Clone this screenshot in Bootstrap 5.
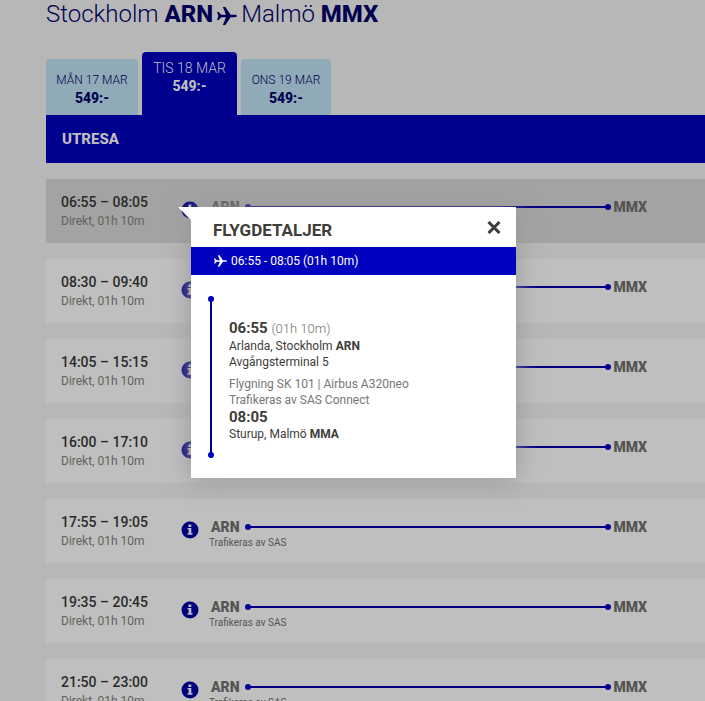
<!DOCTYPE html>
<html lang="sv">
<head>
<meta charset="utf-8">
<meta name="viewport" content="width=device-width, initial-scale=1">
<title>Stockholm ARN – Malmö MMX</title>
<link href="https://cdn.jsdelivr.net/npm/bootstrap@5.3.0/dist/css/bootstrap.min.css" rel="stylesheet">
<style>
  :root { --blue: #00008f; --route: #000080; --navy: #00004f; --bright: #0000bf; --ink: #3d3d3a; }
  body { background: #b7b7b7; font-family: Roboto, "Liberation Sans", sans-serif; font-size: 12px; line-height: 16px; color: #2b2b29; }
  button { font-family: inherit; }
  .page { padding-left: 46px; }
  .trip-title { font-size: 24px; line-height: 28px; font-weight: 300; color: var(--navy); margin-bottom: 24px; }
  .trip-title b { font-weight: 800; }
  .day-tab { border: 0; background: #90aab7; color: var(--navy); font-size: 12px; font-weight: 300; line-height: 18px; padding: 12px 10px 8px; border-radius: 4px 4px 0 0; width: 92px; white-space: nowrap; }
  .day-tab:last-child { width: 90px; }
  .day-tab b { display: block; font-size: 14px; font-weight: 800; }
  .day-tab.is-current { background: var(--blue); color: #bfbfbf; font-size: 14px; width: 95px; padding: 7px 8px 20px; }
  .leg-bar { background: var(--blue); color: #bfbfbf; font-size: 15px; line-height: 20px; font-weight: 800; padding: 14px 16px; margin-bottom: 16px; }
  .flight { background: #bfbfbf; height: 64px; padding-left: 15px; margin-bottom: 16px; }
  .flight.is-open { background: #a3a3a3; }
  .flight-time { width: 120px; padding-top: 13px; }
  .flight-hours { font-size: 14px; line-height: 20px; font-weight: 500; }
  .flight-sub { line-height: 18px; color: #62625c; }
  .info-cell { padding-top: 22px; width: 28px; }
  .info-btn { width: 18px; height: 18px; }
  .flight-route { padding: 18px 58px 0 0; }
  .route-line { font-size: 14px; line-height: 20px; font-weight: 900; color: #555553; padding-left: 2px; }
  .carrier { font-size: 10px; line-height: 12px; color: #555550; }
  .track { height: 2px; background: var(--route); margin: 0 5px 0 8px; }
  .track::before, .track::after { content: ""; width: 6px; height: 6px; border-radius: 50%; background: var(--blue); margin: -2px -3px; }
  .details { position: absolute; top: 28px; left: 10px; width: 325px; z-index: 5; background: #fff; color: var(--ink); box-shadow: 0 2px 24px #969696; }
  .details::before { content: ""; position: absolute; left: -13px; top: 0; width: 13px; height: 13px; background: #fff; clip-path: polygon(0 0, 100% 0, 100% 100%); }
  .details-head { padding: 10px 15px 6px 22px; height: 40px; }
  .details-head h2 { font-size: 17px; line-height: 26px; font-weight: 700; }
  .details-bar { background: var(--bright); color: #fff; font-size: 12px; line-height: 20px; padding: 4px 23px; }
  .details-body { padding: 21px 17px 20px; }
  .stops { width: 2px; background: var(--blue); margin-left: 2px; }
  .stops::before, .stops::after { content: ""; width: 6px; height: 6px; border-radius: 50%; background: var(--bright); margin-left: -2px; flex-shrink: 0; }
  .stop-text { padding: 23px 0 16px 17px; }
  .stop-time { font-size: 15px; line-height: 18px; }
  .stop-time span { font-size: 13px; font-weight: 300; color: #6f6f68; }
  .stop-flight { color: #777; }
  .stop-terminal { margin-bottom: 6px; }
</style>
<script src="https://cdn.jsdelivr.net/npm/bootstrap@5.3.0/dist/js/bootstrap.bundle.min.js"></script>
</head>
<body>
<svg class="d-none" xmlns="http://www.w3.org/2000/svg">
  <symbol id="plane" viewBox="0 0 20 18"><path d="M0 5h1.700l2.600 2.800H9L6.200.8 5.800 0h2.600l5.200 7.800h4.200c1.300 0 2.200.6 2.200 1.200s-.9 1.200-2.200 1.200h-4.200L8.400 18H5.800l.4-.8L9 10.200H4.300L1.700 13H0l1.300-4z"/></symbol>
  <symbol id="info" viewBox="0 0 18 18"><circle cx="9" cy="9" r="8.500" fill="#00007c"/><path d="M7.500 3.500h2.800v2.500H7.500zM6.500 7h3.800v5.200h1.200v1.600h-5v-1.600h1.200V8.600H6.500z" fill="#bfbfbf"/></symbol>
</svg>
<main class="page overflow-hidden">
  <h1 class="trip-title d-flex align-items-center"><span>Stockholm <b>ARN</b></span><svg class="mx-1 mt-1" width="20" height="18" fill="currentColor" aria-hidden="true"><use href="#plane"/></svg><span>Malmö <b>MMX</b></span></h1>
  <nav class="d-flex align-items-end gap-1" aria-label="Datum">
    <button type="button" class="day-tab">MÅN 17 MAR<b>549:-</b></button>
    <button type="button" class="day-tab is-current" aria-current="date">TIS 18 MAR<b>549:-</b></button>
    <button type="button" class="day-tab">ONS 19 MAR<b>549:-</b></button>
  </nav>
  <h2 class="leg-bar">UTRESA</h2>

  <article class="flight is-open d-flex">
    <div class="flight-time"><div class="flight-hours">06:55 – 08:05</div><div class="flight-sub">Direkt, 01h 10m</div></div>
    <div class="info-cell position-relative">
      <button type="button" class="info-btn btn p-0 border-0 d-flex" aria-label="Flygdetaljer"><svg width="18" height="18"><use href="#info"/></svg></button>
      <section class="details" role="dialog" aria-labelledby="details-title">
        <header class="details-head d-flex justify-content-between align-items-start">
          <h2 class="m-0" id="details-title">FLYGDETALJER</h2>
          <button type="button" class="btn p-0 border-0 d-flex" aria-label="Stäng"><svg class="mt-1" width="14" height="13" viewBox="0 0 14 13" stroke="#3d3d3a" stroke-width="3"><path d="M1.500 1l11 11M12.500 1l-11 11"/></svg></button>
        </header>
        <div class="details-bar d-flex align-items-center"><svg class="me-1" width="13" height="12" fill="currentColor" aria-hidden="true"><use href="#plane"/></svg><span>06:55 - 08:05 (01h 10m)</span></div>
        <div class="details-body d-flex">
          <div class="stops d-flex flex-column justify-content-between"></div>
          <div class="stop-text">
            <div class="stop-time"><b>06:55</b> <span>(01h 10m)</span></div>
            <div>Arlanda, Stockholm <b>ARN</b></div>
            <div class="stop-terminal">Avgångsterminal 5</div>
            <div class="stop-flight">Flygning SK 101 | Airbus A320neo</div>
            <div class="stop-flight">Trafikeras av SAS Connect</div>
            <div class="stop-time"><b>08:05</b></div>
            <div>Sturup, Malmö <b>MMA</b></div>
          </div>
        </div>
      </section>
    </div>
    <div class="flight-route flex-grow-1"><div class="route-line d-flex align-items-center"><span>ARN</span><div class="track flex-grow-1 d-flex justify-content-between"></div><span>MMX</span></div></div>
  </article>

  <article class="flight d-flex">
    <div class="flight-time"><div class="flight-hours">08:30 – 09:40</div><div class="flight-sub">Direkt, 01h 10m</div></div>
    <div class="info-cell"><button type="button" class="info-btn btn p-0 border-0 d-flex" aria-label="Flygdetaljer"><svg width="18" height="18"><use href="#info"/></svg></button></div>
    <div class="flight-route flex-grow-1"><div class="route-line d-flex align-items-center"><span>ARN</span><div class="track flex-grow-1 d-flex justify-content-between"></div><span>MMX</span></div></div>
  </article>

  <article class="flight d-flex">
    <div class="flight-time"><div class="flight-hours">14:05 – 15:15</div><div class="flight-sub">Direkt, 01h 10m</div></div>
    <div class="info-cell"><button type="button" class="info-btn btn p-0 border-0 d-flex" aria-label="Flygdetaljer"><svg width="18" height="18"><use href="#info"/></svg></button></div>
    <div class="flight-route flex-grow-1"><div class="route-line d-flex align-items-center"><span>ARN</span><div class="track flex-grow-1 d-flex justify-content-between"></div><span>MMX</span></div></div>
  </article>

  <article class="flight d-flex">
    <div class="flight-time"><div class="flight-hours">16:00 – 17:10</div><div class="flight-sub">Direkt, 01h 10m</div></div>
    <div class="info-cell"><button type="button" class="info-btn btn p-0 border-0 d-flex" aria-label="Flygdetaljer"><svg width="18" height="18"><use href="#info"/></svg></button></div>
    <div class="flight-route flex-grow-1"><div class="route-line d-flex align-items-center"><span>ARN</span><div class="track flex-grow-1 d-flex justify-content-between"></div><span>MMX</span></div></div>
  </article>

  <article class="flight d-flex">
    <div class="flight-time"><div class="flight-hours">17:55 – 19:05</div><div class="flight-sub">Direkt, 01h 10m</div></div>
    <div class="info-cell"><button type="button" class="info-btn btn p-0 border-0 d-flex" aria-label="Flygdetaljer"><svg width="18" height="18"><use href="#info"/></svg></button></div>
    <div class="flight-route flex-grow-1"><div class="route-line d-flex align-items-center"><span>ARN</span><div class="track flex-grow-1 d-flex justify-content-between"></div><span>MMX</span></div><div class="carrier">Trafikeras av SAS</div></div>
  </article>

  <article class="flight d-flex">
    <div class="flight-time"><div class="flight-hours">19:35 – 20:45</div><div class="flight-sub">Direkt, 01h 10m</div></div>
    <div class="info-cell"><button type="button" class="info-btn btn p-0 border-0 d-flex" aria-label="Flygdetaljer"><svg width="18" height="18"><use href="#info"/></svg></button></div>
    <div class="flight-route flex-grow-1"><div class="route-line d-flex align-items-center"><span>ARN</span><div class="track flex-grow-1 d-flex justify-content-between"></div><span>MMX</span></div><div class="carrier">Trafikeras av SAS</div></div>
  </article>

  <article class="flight d-flex">
    <div class="flight-time"><div class="flight-hours">21:50 – 23:00</div><div class="flight-sub">Direkt, 01h 10m</div></div>
    <div class="info-cell"><button type="button" class="info-btn btn p-0 border-0 d-flex" aria-label="Flygdetaljer"><svg width="18" height="18"><use href="#info"/></svg></button></div>
    <div class="flight-route flex-grow-1"><div class="route-line d-flex align-items-center"><span>ARN</span><div class="track flex-grow-1 d-flex justify-content-between"></div><span>MMX</span></div><div class="carrier">Trafikeras av SAS</div></div>
  </article>
</main>
</body>
</html>
